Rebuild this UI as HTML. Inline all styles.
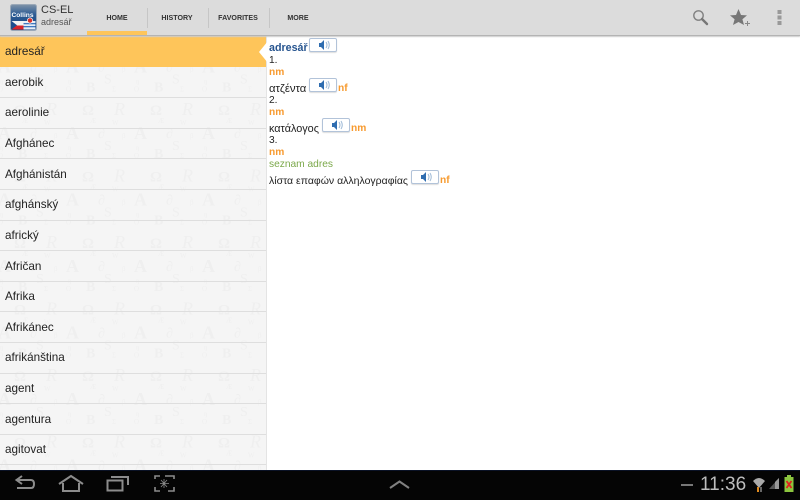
<!DOCTYPE html>
<html><head><meta charset="utf-8">
<style>
html,body{margin:0;padding:0;width:800px;height:500px;overflow:hidden;background:#fff;font-family:"Liberation Sans","DejaVu Sans",sans-serif}
.abs{position:absolute}
#top{position:absolute;left:0;top:0;width:800px;height:35px;background:#dcdcdc;border-bottom:1px solid #b4b4b4;box-shadow:0 1px 1px #ccc}
.tab{position:absolute;top:12.5px;font-size:7.1px;font-weight:bold;color:#333;line-height:10px;text-align:center;width:60px}
.sep{position:absolute;top:8px;width:1px;height:20px;background:#c6c6c6}
#list{position:absolute;left:0;top:36px;width:267px;height:434px;background:#f5f5f5;overflow:hidden;border-right:1px solid #e4e4e4;box-sizing:border-box}
.row{position:absolute;left:0;width:267px;height:30px;font-size:11.7px;color:#222;line-height:14px;padding-left:5px;box-sizing:border-box}
.line{position:absolute;left:0;width:267px;height:1px;background:#dedede}
#c{position:absolute;left:269px;top:0;font-size:10.2px;color:#222}
#c div{position:absolute;white-space:nowrap;line-height:12px}
.o{color:#f79a2e}
.snd{position:absolute;width:26px;height:12px;border:1px solid #b2c3d9;border-radius:2px;background:#fff;box-shadow:0 1px 1px #ddd}
.snd svg{position:absolute;left:9px;top:1px}
</style></head><body>
<div id="list">
<svg class="abs" style="left:0;top:0" width="267" height="434">
<defs><pattern id="p" width="68" height="66.5" patternUnits="userSpaceOnUse" x="-6" y="-10.5">
<g fill="#efefef" font-family="Liberation Serif,serif">
<text x="20" y="23" font-size="15" font-weight="bold">Ω</text>
<text x="52" y="23" font-size="18" font-style="italic">R</text>
<text x="28" y="31" font-size="7">Æ</text>
<text x="50" y="33" font-size="7">W</text>
<text x="4" y="47" font-size="18" font-weight="bold">A</text>
<text x="36" y="46" font-size="14">∂</text>
<text x="60" y="46" font-size="7">β</text>
<text x="6" y="58" font-size="7">ŋ</text>
<text x="42" y="58" font-size="14">S</text>
<text x="24" y="66" font-size="14" font-weight="bold">B</text>
<text x="4" y="66" font-size="7">O</text>
<text x="50" y="66" font-size="7">Σ</text>
</g></pattern></defs>
<rect width="267" height="434" fill="url(#p)"/>
</svg>
<div class="line" style="top:61px"></div><div class="line" style="top:92px"></div><div class="line" style="top:122px"></div><div class="line" style="top:153px"></div><div class="line" style="top:184px"></div><div class="line" style="top:214px"></div><div class="line" style="top:245px"></div><div class="line" style="top:275px"></div><div class="line" style="top:306px"></div><div class="line" style="top:337px"></div><div class="line" style="top:367px"></div><div class="line" style="top:398px"></div><div class="line" style="top:428px"></div>
<div class="abs" style="left:0;top:0;width:267px;height:31px;background:#fec55a"></div>
<div class="row" style="top:9px">adresář</div>
<div class="row" style="top:40px">aerobik</div>
<div class="row" style="top:70px">aerolinie</div>
<div class="row" style="top:101px">Afghánec</div>
<div class="row" style="top:132px">Afghánistán</div>
<div class="row" style="top:162px">afghánský</div>
<div class="row" style="top:193px">africký</div>
<div class="row" style="top:224px">Afričan</div>
<div class="row" style="top:254px">Afrika</div>
<div class="row" style="top:285px">Afrikánec</div>
<div class="row" style="top:315px">afrikánština</div>
<div class="row" style="top:346px">agent</div>
<div class="row" style="top:377px">agentura</div>
<div class="row" style="top:407px">agitovat</div>
</div>
<svg class="abs" style="left:258px;top:41px" width="10" height="22"><polygon points="10,0 1,11 10,22" fill="#fff"/></svg>
<div id="top">
<svg class="abs" style="left:10px;top:4px" width="27" height="27">
<defs><linearGradient id="g" x1="0" y1="0" x2="0" y2="1"><stop offset="0" stop-color="#7f93a8"/><stop offset=".4" stop-color="#2a5a94"/><stop offset="1" stop-color="#20477c"/></linearGradient></defs>
<rect x="0.5" y="0.5" width="26" height="26" rx="2" fill="url(#g)" stroke="#9aa8b8"/>
<rect x="1.500" y="17" width="12" height="4.500" fill="#f2f2f2"/>
<rect x="1.500" y="21.500" width="12" height="4" fill="#d8232a"/>
<polygon points="1.500,17 1.500,25.500 7,21.250" fill="#1d4d8f"/>
<rect x="13.500" y="17" width="12" height="8.500" fill="#e6edf6"/>
<rect x="13.500" y="19" width="12" height="1.300" fill="#3f78c0"/><rect x="13.500" y="22" width="12" height="1.300" fill="#3f78c0"/>
<circle cx="20" cy="16.500" r="2.600" fill="#d8332a" stroke="#fff" stroke-width=".7"/>
<text x="1.500" y="13" font-size="6.600" font-weight="bold" fill="#fff" font-family="Liberation Sans,sans-serif">Collins</text>
</svg>
<div class="abs" style="left:41px;top:3px;font-size:11px;line-height:14px;color:#333">CS-EL</div>
<div class="abs" style="left:41px;top:16px;font-size:9px;line-height:12px;color:#555">adresář</div>
<div class="tab" style="left:87px">HOME</div>
<div class="sep" style="left:147px"></div>
<div class="tab" style="left:147px">HISTORY</div>
<div class="sep" style="left:208px"></div>
<div class="tab" style="left:208px">FAVORITES</div>
<div class="sep" style="left:269px"></div>
<div class="tab" style="left:268px">MORE</div>
<div class="abs" style="left:87px;top:31px;width:60px;height:4px;background:#fec55a"></div>
<svg class="abs" style="left:692px;top:9px" width="17" height="17"><circle cx="6.5" cy="6.5" r="4.7" fill="none" stroke="#808080" stroke-width="1.4"/><path d="M10 10 L15 15" stroke="#777" stroke-width="2.4" stroke-linecap="round"/></svg>
<svg class="abs" style="left:730px;top:9px" width="22" height="17"><polygon points="8.5,0 11,6 17,6.400 12.400,10.200 14,16 8.500,13 3,16 4.600,10.200 0,6.400 6,6" fill="#777"/><path d="M15 14.500h5M17.500 12v5" stroke="#888" stroke-width="1"/></svg>
<svg class="abs" style="left:777px;top:10px" width="5" height="15"><rect width="4" height="4" x="0.5" y="0" fill="#999"/><rect width="4" height="4" x="0.5" y="5.500" fill="#999"/><rect width="4" height="4" x="0.5" y="11" fill="#999"/></svg>
</div>
<div id="c">
<div style="top:42px;left:0;font-weight:bold;font-size:10.700px;color:#26548f">adresář</div>
<div style="top:55px;left:0">1.</div>
<div class="o" style="top:67px;left:0;font-weight:bold">nm</div>
<div style="top:83px;left:0;font-size:11.300px">ατζέντα</div>
<div class="o" style="top:83px;left:69px;font-weight:bold">nf</div>
<div style="top:95px;left:0">2.</div>
<div class="o" style="top:107px;left:0;font-weight:bold">nm</div>
<div style="top:123px;left:0;font-size:10.850px">κατάλογος</div>
<div class="o" style="top:123px;left:82px;font-weight:bold">nm</div>
<div style="top:135px;left:0">3.</div>
<div class="o" style="top:147px;left:0;font-weight:bold">nm</div>
<div style="top:159px;left:0;color:#7ba84a">seznam adres</div>
<div style="top:175px;left:0;font-size:10.500px">λίστα επαφών αλληλογραφίας</div>
<div class="o" style="top:175px;left:171px;font-weight:bold">nf</div>
</div>
<div class="snd" style="left:309px;top:38px"><svg width="11" height="10"><path d="M0 3h2l3-3v10l-3-3H0z" fill="#2f6db0"/><path d="M7 2q2 3 0 6M9 1q2.500 4 0 8" stroke="#9db9d6" fill="none"/></svg></div>
<div class="snd" style="left:309px;top:78px"><svg width="11" height="10"><path d="M0 3h2l3-3v10l-3-3H0z" fill="#2f6db0"/><path d="M7 2q2 3 0 6M9 1q2.500 4 0 8" stroke="#9db9d6" fill="none"/></svg></div>
<div class="snd" style="left:322px;top:118px"><svg width="11" height="10"><path d="M0 3h2l3-3v10l-3-3H0z" fill="#2f6db0"/><path d="M7 2q2 3 0 6M9 1q2.500 4 0 8" stroke="#9db9d6" fill="none"/></svg></div>
<div class="snd" style="left:411px;top:170px"><svg width="11" height="10"><path d="M0 3h2l3-3v10l-3-3H0z" fill="#2f6db0"/><path d="M7 2q2 3 0 6M9 1q2.500 4 0 8" stroke="#9db9d6" fill="none"/></svg></div>
<div class="abs" style="left:0;top:470px;width:800px;height:30px;background:#050505">
<div class="abs" style="left:0;top:0;width:800px;height:1px;background:#0a1226"></div>
<svg class="abs" style="left:0;top:0" width="200" height="30" fill="none" stroke="#8c8c8c" stroke-width="2">
<path d="M17 10H31Q34 10 34 14Q34 18 31 18H17"/><path d="M22 6L16.500 10L22 14" />
<path d="M59 14L71 6L83 14" /><path d="M63 13V21H79V13"/>
<rect x="107.500" y="10.500" width="15" height="10"/><path d="M111 7H128V15"/>
<path d="M155 9V6H160M165 6H174V9M174 17V21H168M160 21H155V17" stroke-width="1.600"/>
<path d="M164 9V18M160 13.500H169M161 10L167 17M167 10L161 17" stroke-width=".8"/>
</svg>
<svg class="abs" style="left:388px;top:8px" width="24" height="14"><path d="M2 10L11.500 3.500L21 10" fill="none" stroke="#808080" stroke-width="2"/></svg>
<div class="abs" style="left:681px;top:14px;width:12px;height:2px;background:#777"></div>
<div class="abs" style="left:700px;top:4px;font-size:19px;line-height:22px;color:#bdbdbd">11:36</div>
<svg class="abs" style="left:752px;top:6px" width="15" height="17"><path d="M1 5Q7 -1 13 5L7 12Z" fill="#aaa"/><path d="M6 11v5" stroke="#e08a1e" stroke-width="2"/><path d="M9 11v5" stroke="#888" stroke-width="1.500"/></svg>
<svg class="abs" style="left:768px;top:7px" width="12" height="13"><polygon points="11,1 11,12 1,12" fill="#555"/><polygon points="11,1 11,12 7,12 7,5" fill="#999"/></svg>
<svg class="abs" style="left:784px;top:5px" width="10" height="18"><rect x="3" y="0" width="4" height="2" fill="#8cc63f"/><rect x="0.500" y="2" width="9" height="15" fill="#8cc63f"/><path d="M2.500 6L7.500 13M7.500 6L2.500 13" stroke="#e02020" stroke-width="1.800"/></svg>
</div>
</body></html>
